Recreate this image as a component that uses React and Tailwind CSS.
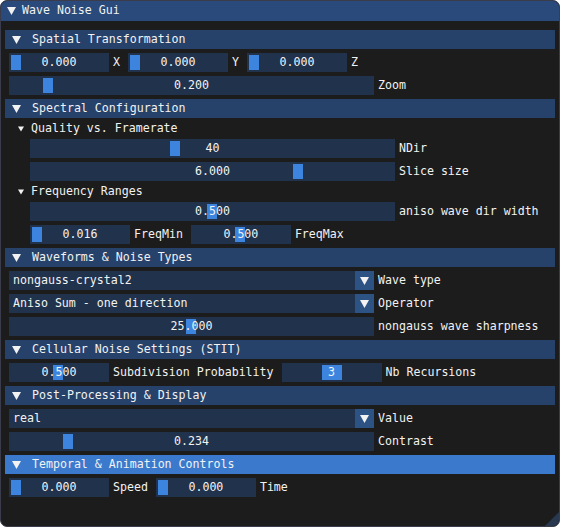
import React from "react";

const FONT = "font-['DejaVu_Sans_Mono','Liberation_Mono',monospace] text-[11.6px] leading-none text-[#f2f2f2]";

function Arrow({ size = "big" }) {
  if (size === "small") {
    return (
      <svg width="6" height="6" viewBox="0 0 6 6" className="shrink-0">
        <path d="M0 0.5 L6 0.5 L3 5.5 Z" fill="#f2f2f2" />
      </svg>
    );
  }
  return (
    <svg width="9" height="8" viewBox="0 0 9 8" className="shrink-0">
      <path d="M0 0 L9 0 L4.5 8 Z" fill="#f2f2f2" />
    </svg>
  );
}

function Header({ children, active }) {
  return (
    <div
      className={
        "-mx-[4px] h-[19px] flex items-center pl-[7px] gap-[11px] " +
        (active ? "bg-[#3b79cc]" : "bg-[#26416a]")
      }
    >
      <Arrow />
      <span>{children}</span>
    </div>
  );
}

function TreeNode({ children }) {
  return (
    <div className="h-[13px] flex items-center pl-[9px] gap-[7px]">
      <Arrow size="small" />
      <span>{children}</span>
    </div>
  );
}

function Slider({ className = "w-[365px]", value, grab, grabW = 10 }) {
  return (
    <div className={"relative h-[19px] bg-[#21324d] flex items-center justify-center shrink-0 " + className}>
      <div className="absolute top-[2px] h-[15px] bg-[#3d84df]" style={{ left: grab, width: grabW }} />
      <span className="relative">{value}</span>
    </div>
  );
}

function Combo({ value }) {
  return (
    <div className="h-[19px] w-[365px] bg-[#21324d] flex items-center shrink-0">
      <span className="flex-1 pl-[4px]">{value}</span>
      <div className="w-[19px] h-[19px] bg-[#2d5385] flex items-center justify-center">
        <Arrow />
      </div>
    </div>
  );
}

function Label({ children }) {
  return <span className="ml-[4px] whitespace-nowrap">{children}</span>;
}

function Row({ children, indent }) {
  return <div className={"flex items-center h-[19px] " + (indent ? "pl-[21px]" : "")}>{children}</div>;
}

function Pair({ children, last }) {
  return <div className={"flex items-center " + (last ? "" : "mr-[8px]")}>{children}</div>;
}

export default function App() {
  return (
    <div className={"w-[562px] h-[528px] bg-white " + FONT}>
      <div className="relative w-[560px] h-[527px] rounded-[7px] overflow-hidden border border-[#3a3c4c] bg-[#1c1c1c]">
        <div className="h-[20px] bg-[#294a7a] flex items-center pl-[6px] gap-[6px]">
          <Arrow />
          <span>Wave Noise Gui</span>
        </div>

        <div className="flex flex-col gap-[4px] pt-[9px] pl-[8px] pr-[8px]">
          <Header>Spatial Transformation</Header>
          <Row>
            <Pair>
              <Slider className="w-[100px]" value="0.000" grab={2} />
              <Label>X</Label>
            </Pair>
            <Pair>
              <Slider className="w-[100px]" value="0.000" grab={2} />
              <Label>Y</Label>
            </Pair>
            <Pair last>
              <Slider className="w-[100px]" value="0.000" grab={2} />
              <Label>Z</Label>
            </Pair>
          </Row>
          <Row>
            <Slider value="0.200" grab={34} />
            <Label>Zoom</Label>
          </Row>

          <Header>Spectral Configuration</Header>
          <TreeNode>Quality vs. Framerate</TreeNode>
          <Row indent>
            <Slider value="40" grab={140} />
            <Label>NDir</Label>
          </Row>
          <Row indent>
            <Slider value="6.000" grab={263} />
            <Label>Slice size</Label>
          </Row>
          <TreeNode>Frequency Ranges</TreeNode>
          <Row indent>
            <Slider value="0.500" grab={177} />
            <Label>aniso wave dir width</Label>
          </Row>
          <Row indent>
            <Pair>
              <Slider className="w-[100px]" value="0.016" grab={2} />
              <Label>FreqMin</Label>
            </Pair>
            <Pair last>
              <Slider className="w-[100px]" value="0.500" grab={44} />
              <Label>FreqMax</Label>
            </Pair>
          </Row>

          <Header>Waveforms &amp; Noise Types</Header>
          <Row>
            <Combo value="nongauss-crystal2" />
            <Label>Wave type</Label>
          </Row>
          <Row>
            <Combo value="Aniso Sum - one direction" />
            <Label>Operator</Label>
          </Row>
          <Row>
            <Slider value="25.000" grab={177} />
            <Label>nongauss wave sharpness</Label>
          </Row>

          <Header>Cellular Noise Settings (STIT)</Header>
          <Row>
            <Pair>
              <Slider className="w-[100px]" value="0.500" grab={44} />
              <Label>Subdivision Probability</Label>
            </Pair>
            <Pair last>
              <Slider className="w-[100px]" value="3" grab={40} grabW={20} />
              <Label>Nb Recursions</Label>
            </Pair>
          </Row>

          <Header>Post-Processing &amp; Display</Header>
          <Row>
            <Combo value="real" />
            <Label>Value</Label>
          </Row>
          <Row>
            <Slider value="0.234" grab={54} />
            <Label>Contrast</Label>
          </Row>

          <Header active>Temporal &amp; Animation Controls</Header>
          <Row>
            <Pair>
              <Slider className="w-[100px]" value="0.000" grab={2} />
              <Label>Speed</Label>
            </Pair>
            <Pair last>
              <Slider className="w-[100px]" value="0.000" grab={2} />
              <Label>Time</Label>
            </Pair>
          </Row>
        </div>

        <svg width="14" height="14" viewBox="0 0 14 14" className="absolute right-0 bottom-0">
          <path d="M14 0 L14 14 L0 14 Z" fill="#28384e" />
        </svg>
      </div>
    </div>
  );
}
